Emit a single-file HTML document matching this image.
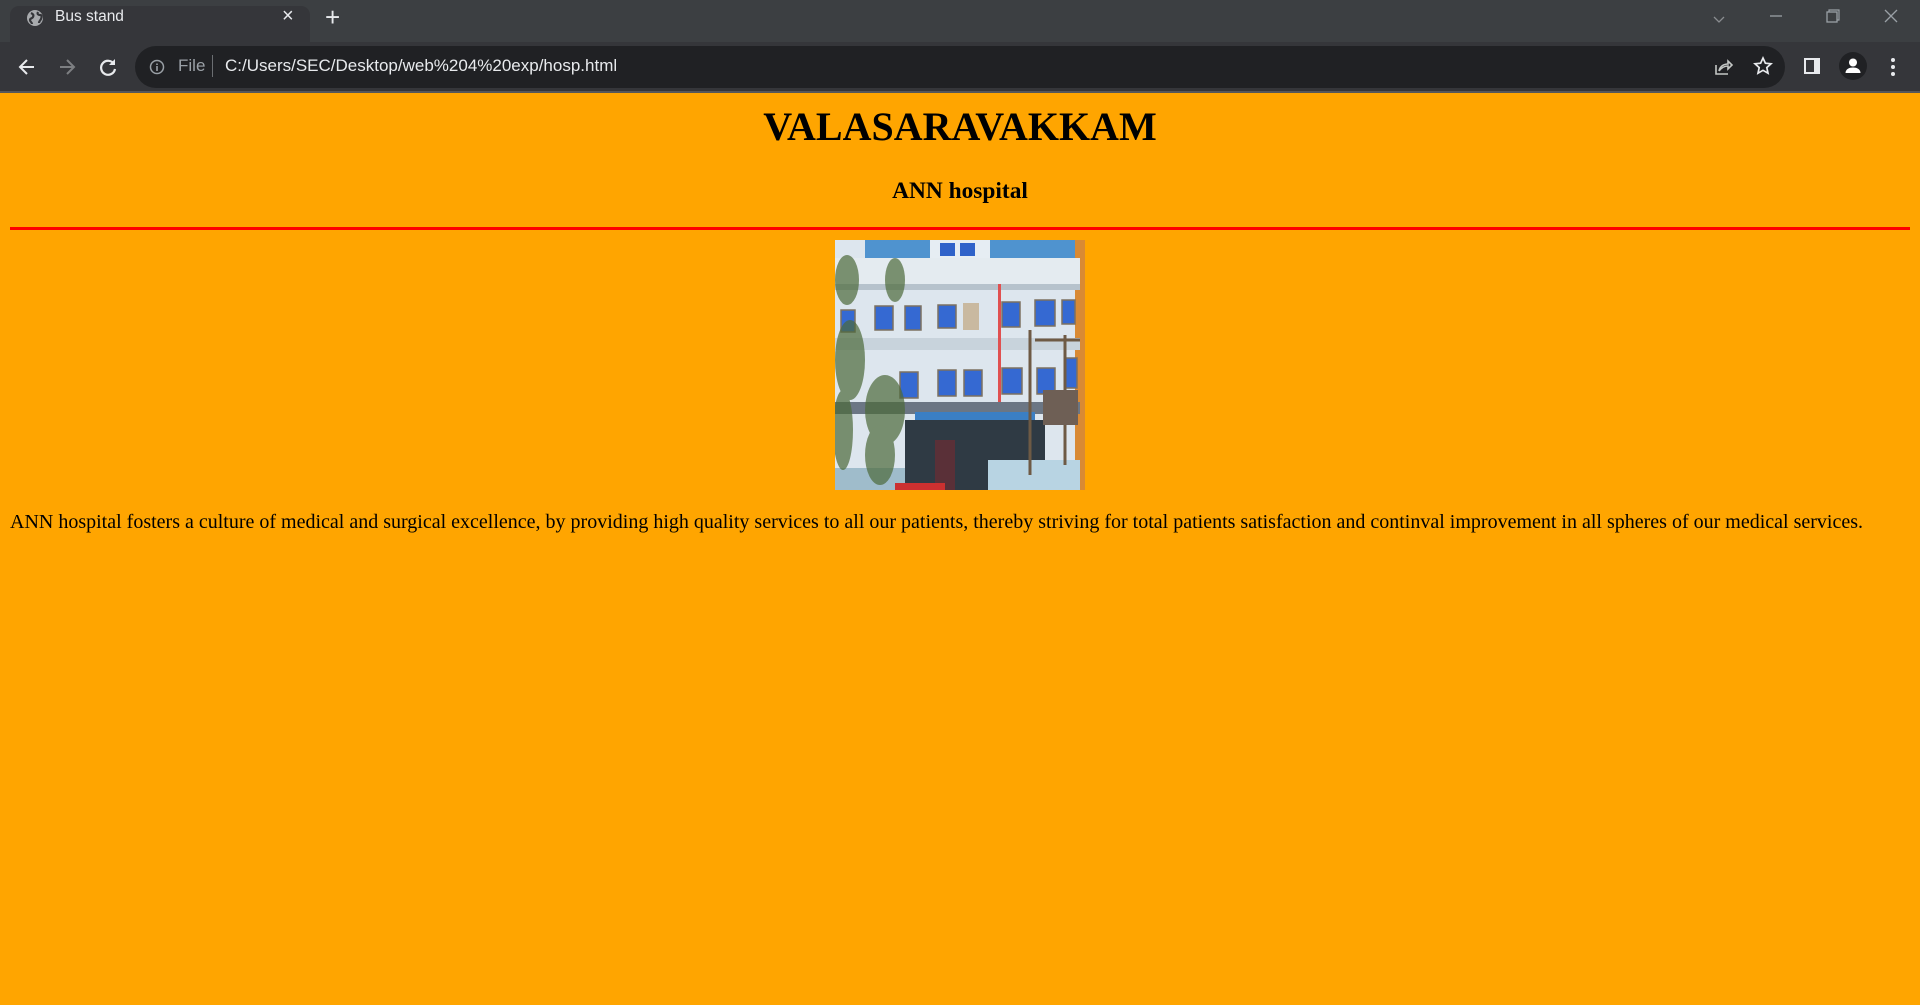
<!DOCTYPE html>
<html><head><meta charset="utf-8"><style>
*{margin:0;padding:0;box-sizing:border-box}
html,body{width:1920px;height:1005px;overflow:hidden;background:#FFA500;font-family:"Liberation Serif",serif}
.strip{position:absolute;left:0;top:0;width:1920px;height:42px;background:#3c3f42}
.tab{position:absolute;left:10px;top:6px;width:300px;height:36px;background:#35363a;border-radius:9px 9px 0 0}
.tb{position:absolute;left:0;top:42px;width:1920px;height:50px;background:#35363a}
.line{position:absolute;left:0;top:91px;width:1920px;height:2px;background:#55575b}
.url{position:absolute;left:135px;top:46px;width:1650px;height:42px;background:#202124;border-radius:21px}
.ui{position:absolute;font-family:"Liberation Sans",sans-serif;white-space:nowrap}
.abs{position:absolute;white-space:nowrap;color:#000}
</style></head><body>
<div class="strip"></div><div class="tab"></div>
<div class="tb"></div><div class="url"></div><div class="line"></div>
<svg class="ui" style="left:26px;top:9px" width="18" height="18" viewBox="0 0 18 18"><circle cx="9" cy="9" r="8" fill="#a8aaad"/><path d="M5 4c2 1 3 2 2 4s-3 1-3 3 2 2 2 4M12 3c-1 2 0 3 2 3s2 2 1 4-2 2-2 4" stroke="#35363a" stroke-width="2.2" fill="none"/></svg>
<div class="ui" style="left:55px;top:8px;font-size:15.5px;color:#e8eaed">Bus stand</div>
<div class="ui" style="left:282px;top:5px;font-size:20px;color:#e8eaed">×</div>
<div class="ui" style="left:325px;top:2px;font-size:26px;color:#e8eaed;font-weight:300">+</div>
<svg class="ui" style="left:16px;top:56px" width="22" height="22" viewBox="0 0 22 22"><path d="M18 11H5M11 4l-7 7 7 7" stroke="#e8eaed" stroke-width="2" fill="none"/></svg>
<svg class="ui" style="left:56px;top:56px" width="22" height="22" viewBox="0 0 22 22"><path d="M4 11h13M11 4l7 7-7 7" stroke="#7d7f82" stroke-width="2" fill="none"/></svg>
<svg class="ui" style="left:97px;top:56px" width="22" height="22" viewBox="0 0 22 22"><path d="M17 8A7 7 0 1 0 18 13" stroke="#e8eaed" stroke-width="2.2" fill="none"/><path d="M18 3v6h-6z" fill="#e8eaed"/></svg>
<svg class="ui" style="left:149px;top:59px" width="16" height="16" viewBox="0 0 16 16"><circle cx="8" cy="8" r="6.5" stroke="#9aa0a6" stroke-width="1.5" fill="none"/><path d="M8 7v5M8 4.5v1.5" stroke="#9aa0a6" stroke-width="1.6"/></svg>
<div class="ui" style="left:178px;top:56px;font-size:17px;color:#9aa0a6">File</div>
<div class="ui" style="left:212px;top:55px;width:1px;height:22px;background:#6b6e72"></div>
<div class="ui" style="left:225px;top:56px;font-size:17px;color:#e8eaed">C:/Users/SEC/Desktop/web%204%20exp/hosp.html</div>
<svg class="ui" style="left:1712px;top:56px" width="22" height="22" viewBox="0 0 22 22"><path d="M4 9v9h12M7 15c1-5 5-7 9-7V5l4 4-4 4v-3c-3 0-6 1-9 5" stroke="#c4c7c5" stroke-width="1.6" fill="none"/></svg>
<svg class="ui" style="left:1752px;top:55px" width="22" height="22" viewBox="0 0 22 22"><path d="M11 3l2.4 5.2 5.6.6-4.2 3.8 1.2 5.6L11 15.3 6 18.2l1.2-5.6L3 8.8l5.6-.6z" stroke="#e8eaed" stroke-width="1.7" fill="none"/></svg>
<svg class="ui" style="left:1803px;top:57px" width="18" height="18" viewBox="0 0 18 18"><rect x="1" y="1" width="16" height="16" fill="#e8eaed"/><rect x="3" y="3" width="8" height="12" fill="#35363a"/></svg>
<svg class="ui" style="left:1838px;top:51px" width="30" height="30" viewBox="0 0 30 30"><circle cx="15" cy="15" r="14" fill="#202124"/><circle cx="15" cy="11.5" r="4" fill="#fff"/><path d="M7.5 22c0-4 4-5.5 7.5-5.5s7.5 1.5 7.5 5.5z" fill="#fff"/></svg>
<svg class="ui" style="left:1888px;top:56px" width="10" height="22" viewBox="0 0 10 22"><circle cx="5" cy="4" r="2" fill="#e8eaed"/><circle cx="5" cy="11" r="2" fill="#e8eaed"/><circle cx="5" cy="18" r="2" fill="#e8eaed"/></svg>
<svg class="ui" style="left:1710px;top:8px" width="210" height="24" viewBox="0 0 210 24"><path d="M4 9l5 5 5-5" stroke="#8a8d90" stroke-width="1.3" fill="none"/><path d="M60 8h12" stroke="#9aa0a6" stroke-width="1.3"/><rect x="117" y="4" width="10" height="10" stroke="#9aa0a6" fill="none" stroke-width="1.3"/><path d="M119 4V2h10v10h-2" stroke="#9aa0a6" fill="none" stroke-width="1.2"/><path d="M175 2l12 12M187 2l-12 12" stroke="#9aa0a6" stroke-width="1.3"/></svg>

<div class="abs" style="left:0;width:1920px;text-align:center;top:104px;font-size:40px;font-weight:bold;line-height:46px">VALASARAVAKKAM</div>
<div class="abs" style="left:0;width:1920px;text-align:center;top:178px;font-size:23.4px;font-weight:bold;line-height:27px">ANN hospital</div>
<div style="position:absolute;left:10px;top:227px;width:1900px;height:3px;background:#ff0000"></div>

<svg style="position:absolute;left:835px;top:240px" width="250" height="250" viewBox="0 0 250 250">
<rect width="250" height="250" fill="#dde6ee"/>
<rect x="30" y="0" width="220" height="18" fill="#4f93cf"/>
<rect x="95" y="0" width="60" height="18" fill="#e6edf3"/>
<rect x="105" y="3" width="15" height="13" fill="#2f62c9"/><rect x="125" y="3" width="15" height="13" fill="#2f62c9"/>
<rect x="240" y="0" width="10" height="250" fill="#d98a34"/>
<rect x="0" y="18" width="245" height="32" fill="#e4ebf0"/>
<rect x="0" y="44" width="245" height="6" fill="#b6c2cc"/>
<rect x="0" y="98" width="245" height="12" fill="#c8d3dc"/>
<g fill="#3569d2" stroke="#7d7060" stroke-width="1.5">
<rect x="6" y="70" width="14" height="22"/><rect x="40" y="66" width="18" height="24"/><rect x="70" y="66" width="16" height="24"/>
<rect x="103" y="65" width="18" height="23"/><rect x="167" y="62" width="18" height="25"/><rect x="200" y="60" width="20" height="26"/><rect x="227" y="60" width="13" height="24"/>
<rect x="103" y="130" width="18" height="26"/><rect x="129" y="130" width="18" height="26"/><rect x="167" y="128" width="20" height="26"/><rect x="202" y="128" width="18" height="26"/><rect x="230" y="118" width="12" height="30"/><rect x="65" y="132" width="18" height="26"/>
</g>
<rect x="128" y="63" width="16" height="27" fill="#c9b9a0"/>
<rect x="163" y="44" width="3" height="120" fill="#e05050"/>
<rect x="0" y="162" width="245" height="12" fill="#6b7684"/>
<rect x="80" y="172" width="120" height="8" fill="#3b7fc4"/>
<rect x="70" y="180" width="140" height="70" fill="#2f3a44"/>
<rect x="100" y="200" width="20" height="50" fill="#5a3038"/>
<rect x="153" y="220" width="92" height="30" fill="#b8d4e3"/>
<rect x="0" y="228" width="70" height="22" fill="#9fbccb"/>
<rect x="60" y="243" width="50" height="7" fill="#cc3030"/>
<path d="M195 90v145M230 95v130M200 100h45" stroke="#6e5a45" stroke-width="3" fill="none"/>
<rect x="208" y="150" width="35" height="35" fill="#6e5f55"/>
<g fill="#4d6a3a" opacity=".7">
<ellipse cx="12" cy="40" rx="12" ry="25"/><ellipse cx="60" cy="40" rx="10" ry="22"/><ellipse cx="15" cy="120" rx="15" ry="40"/>
<ellipse cx="50" cy="170" rx="20" ry="35"/><ellipse cx="45" cy="215" rx="15" ry="30"/><ellipse cx="8" cy="190" rx="10" ry="40"/>
</g>
</svg>

<div class="abs" style="left:10px;top:508px;font-size:20px;line-height:28px;width:1900px;white-space:normal">ANN hospital fosters a culture of medical and surgical excellence, by providing high quality services to all our patients, thereby striving for total patients satisfaction and continval improvement in all spheres of our medical services.</div>
</body></html>
